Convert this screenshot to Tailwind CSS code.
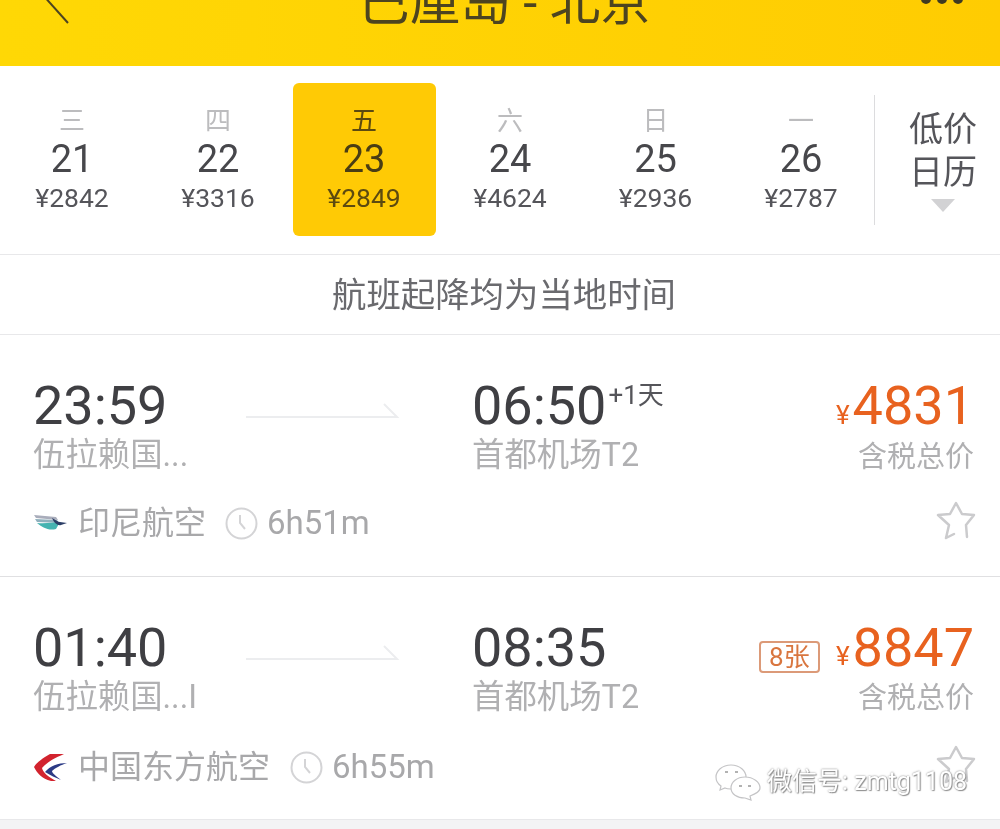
<!DOCTYPE html>
<html lang="zh">
<head>
  <meta charset="UTF-8" />
  <title>巴厘岛 - 北京</title>
  <script src="https://cdn.jsdelivr.net/npm/@tailwindcss/browser@4"></script>
</head>
<body class="bg-[#f3f3f5] font-['Roboto','Noto_Sans_CJK_SC',sans-serif]">
<div class="relative w-[1000px] h-[829px] overflow-hidden blur-[0.7px]">

  <!-- Title bar -->
  <header class="h-[66px] overflow-hidden bg-gradient-to-r from-[#ffd805] to-[#ffcc02] grid grid-cols-[1fr_auto_1fr] items-start">
    <svg class="ml-[38px]" width="34" height="26" viewBox="0 0 34 26" fill="none" stroke="#4d4420" stroke-width="2"><path d="M4 -6 L30 23"/></svg>
    <h1 class="-mt-[23px] pl-[10px] text-[50.5px] leading-[51px] font-normal text-[#4d4420] whitespace-pre">巴厘岛 - 北京</h1>
    <svg class="justify-self-end mr-[35px]" width="46" height="6" viewBox="0 0 46 6" fill="#3f3a22"><circle cx="7" cy="-1" r="5"/><circle cx="23" cy="-1" r="5"/><circle cx="39" cy="-1" r="5"/></svg>
  </header>

  <!-- Date strip -->
  <section class="h-[189px] bg-white border-b border-[#e8e8ea] flex items-center">
    <div class="flex w-[875px] h-[153px] -ml-[1px] -mt-[1px] text-center">
      <div class="w-[146px] flex flex-col items-center pt-[23px]">
        <span class="text-[26px] leading-[31px] text-[#bcbcbe]">三</span>
        <span class="text-[38px] leading-[44px] text-[#47474b]">21</span>
        <span class="text-[26.5px] leading-[34px] text-[#55555a] whitespace-nowrap">¥2842</span>
      </div>
      <div class="w-[146px] flex flex-col items-center pt-[23px]">
        <span class="text-[26px] leading-[31px] text-[#bcbcbe]">四</span>
        <span class="text-[38px] leading-[44px] text-[#47474b]">22</span>
        <span class="text-[26.5px] leading-[34px] text-[#55555a] whitespace-nowrap">¥3316</span>
      </div>
      <div class="w-[143px] mx-[1.5px] rounded-[6px] bg-[#ffca05] flex flex-col items-center pt-[23px]">
        <span class="text-[26px] leading-[31px] text-[#5c4a10]">五</span>
        <span class="text-[38px] leading-[44px] text-[#4a3d14]">23</span>
        <span class="text-[26.5px] leading-[34px] text-[#5c4a10] whitespace-nowrap">¥2849</span>
      </div>
      <div class="w-[146px] flex flex-col items-center pt-[23px]">
        <span class="text-[26px] leading-[31px] text-[#bcbcbe]">六</span>
        <span class="text-[38px] leading-[44px] text-[#47474b]">24</span>
        <span class="text-[26.5px] leading-[34px] text-[#55555a] whitespace-nowrap">¥4624</span>
      </div>
      <div class="w-[145px] flex flex-col items-center pt-[23px]">
        <span class="text-[26px] leading-[31px] text-[#bcbcbe]">日</span>
        <span class="text-[38px] leading-[44px] text-[#47474b]">25</span>
        <span class="text-[26.5px] leading-[34px] text-[#55555a] whitespace-nowrap">¥2936</span>
      </div>
      <div class="w-[146px] flex flex-col items-center pt-[23px]">
        <span class="text-[26px] leading-[31px] text-[#bcbcbe]">一</span>
        <span class="text-[38px] leading-[44px] text-[#47474b]">26</span>
        <span class="text-[26.5px] leading-[34px] text-[#55555a] whitespace-nowrap">¥2787</span>
      </div>
    </div>
    <div class="w-[125px] h-[130px] border-l border-[#dcdcde] flex flex-col items-center pl-[12px] pt-[13px] text-[34px] leading-[43px] text-[#55555a]">
      <span>低价</span>
      <span>日历</span>
      <svg class="mt-[5px]" width="24" height="13" viewBox="0 0 24 13" fill="#d2d2d4"><path d="M0 0 H24 L12 13 Z"/></svg>
    </div>
  </section>

  <!-- Notice -->
  <div class="h-[80px] bg-white border-b border-[#e8e8ea] flex items-center justify-center pl-[8px] pt-[3px] text-[34.4px] text-[#6a6a6e]">航班起降均为当地时间</div>

  <!-- Flight 1 -->
  <article class="h-[242px] bg-white border-b border-[#e0e0e2] pl-[34px] pr-[26px] pt-[40px]">
    <div class="grid grid-cols-[212px_226px_1fr]">
      <div>
        <div class="-ml-[1px] text-[54px] leading-[62px] text-[#3f3f43]">23:59</div>
        <div class="-ml-[1px] text-[32.4px] leading-[36px] text-[#b0b0b2]">伍拉赖国...</div>
      </div>
      <svg class="mt-[27px]" width="154" height="20" viewBox="0 0 154 20" fill="none" stroke="#ecedef" stroke-width="2"><path d="M0 15 H151 L138 2"/></svg>
      <div class="flex justify-between">
        <div>
          <div class="text-[54px] leading-[62px] text-[#3f3f43] whitespace-nowrap">06:50<sup class="text-[26px] leading-none text-[#55555a] align-baseline relative -top-[20px] ml-[2px]">+1天</sup></div>
          <div class="text-[32.4px] leading-[36px] text-[#b0b0b2]">首都机场T2</div>
        </div>
        <div class="text-right">
          <div class="text-[#e8621f] text-[54px] leading-[62px] whitespace-nowrap"><span class="text-[26px] leading-none mr-[3px]">¥</span>4831</div>
          <div class="mt-[2px] text-[29px] leading-[36px] text-[#b0b0b2]">含税总价</div>
        </div>
      </div>
    </div>
    <div class="flex items-center mt-[26px] h-[44px]">
      <svg class="mr-[11px]" width="33" height="20" viewBox="0 0 33 20"><path d="M0 2 L22 4 L24 7 L2 5 Z" fill="#a9adbb"/><path d="M1 6 L23 7 L25 10 L3 9 Z" fill="#8fb0bd"/><path d="M3 10 C12 11 20 9 26 9 L22 16 C14 18 8 14 3 10 Z" fill="#45b3b1"/><path d="M18 5 C22 7 24 9 26 9 L33 10 L27 12 C24 13 20 10 18 5 Z" fill="#2c3e66"/></svg>
      <span class="text-[32px] text-[#a8a8aa]">印尼航空</span>
      <svg class="ml-[19px] mr-[9px]" width="33" height="33" viewBox="0 0 33 33" fill="none" stroke="#d4d4d6"><circle cx="16.5" cy="16.5" r="15" stroke-width="2"/><path d="M15 8 V16 L20 22" stroke-width="2"/></svg>
      <span class="text-[33px] text-[#a8a8aa]">6h51m</span>
      <svg class="ml-auto -mr-[3px] -mt-[4px]" width="42" height="40" viewBox="0 0 42 40" fill="none" stroke="#cbcbcd" stroke-width="2.5" stroke-linejoin="round" stroke-linecap="round"><path d="M11 37 L14 24 L3 14 L15 13 L21 2 L27 13 L39 14 L31 24 L32 36 M11 37 L19 33"/></svg>
    </div>
  </article>

  <!-- Flight 2 -->
  <article class="h-[243px] bg-white border-b border-[#e8e8ea] pl-[34px] pr-[26px] pt-[40px]">
    <div class="grid grid-cols-[212px_226px_1fr]">
      <div>
        <div class="-ml-[1px] text-[54px] leading-[62px] text-[#3f3f43]">01:40</div>
        <div class="-ml-[1px] text-[32.4px] leading-[36px] text-[#b0b0b2] whitespace-nowrap">伍拉赖国...I</div>
      </div>
      <svg class="mt-[27px]" width="154" height="20" viewBox="0 0 154 20" fill="none" stroke="#ecedef" stroke-width="2"><path d="M0 15 H151 L138 2"/></svg>
      <div class="flex justify-between">
        <div>
          <div class="text-[54px] leading-[62px] text-[#3f3f43]">08:35</div>
          <div class="text-[32.4px] leading-[36px] text-[#b0b0b2]">首都机场T2</div>
        </div>
        <div class="text-right">
          <div class="flex items-start justify-end h-[62px] text-[#e8621f] text-[54px] leading-[62px] whitespace-nowrap">
            <span class="w-[61px] h-[32px] mt-[24px] mr-[16px] rounded-[4px] border-2 border-[#dc9a78] text-[#d9763f] text-[26px] leading-[28px] text-center">8张</span>
            <span class="text-[26px] mt-[8px] mr-[3px]">¥</span>8847
          </div>
          <div class="mt-[1px] text-[29px] leading-[36px] text-[#b0b0b2]">含税总价</div>
        </div>
      </div>
    </div>
    <div class="flex items-center mt-[29px] h-[44px]">
      <svg class="mr-[11px]" width="33" height="29" viewBox="0 0 33 29"><path d="M30 1 H16 C9 5 3 9 0 14 C3 20 8 26 17 28 H22 C15 24 9 20 8 15 C13 9 21 5 30 1 Z" fill="#d2232e"/><path d="M33 10 C24 10 16 13 11 19 C16 22 22 25 27 27 C22 23 18 20 18 18 C21 15 27 12 33 10 Z" fill="#2b3a85"/></svg>
      <span class="text-[32px] text-[#a8a8aa]">中国东方航空</span>
      <svg class="ml-[20px] mr-[9px]" width="33" height="33" viewBox="0 0 33 33" fill="none" stroke="#d4d4d6"><circle cx="16.5" cy="16.5" r="15" stroke-width="2"/><path d="M15 8 V16 L20 22" stroke-width="2"/></svg>
      <span class="text-[33px] text-[#a8a8aa]">6h55m</span>
      <svg class="ml-auto -mr-[3px] -mt-[4px]" width="42" height="40" viewBox="0 0 42 40" fill="none" stroke="#cbcbcd" stroke-width="2.5" stroke-linejoin="round" stroke-linecap="round"><path d="M11 37 L14 24 L3 14 L15 13 L21 2 L27 13 L39 14 L31 24 L32 36 M11 37 L19 33"/></svg>
    </div>
  </article>

  <!-- WeChat watermark over the list -->
  <div class="absolute left-[715px] top-[763px] flex items-center gap-[6px]">
    <svg width="46" height="38" viewBox="0 0 46 38" fill="#ffffff" stroke="#c4c4c6" stroke-width="1.2"><path d="M16 2 C7 2 1 8 1 14 C1 18 3 21 6 23 L5 27 L10 25 C12 26 14 26 16 26 C24 26 31 20 31 14 C31 8 25 2 16 2 Z"/><path d="M30 14 C22 14 16 19 16 25 C16 31 22 35 30 35 L36 37 L35 33 C40 31 45 29 45 25 C45 19 38 14 30 14 Z"/><path d="M24 23 h3 M33 23 h3 M10 9 h3 M20 9 h3" stroke="#999" stroke-width="1.5"/></svg>
    <span class="text-[25px] leading-[36px] text-white whitespace-nowrap [text-shadow:0_0_2px_#777,1px_1px_1px_#999]">微信号: zmtg1108</span>
  </div>
</div>
</body>
</html>
